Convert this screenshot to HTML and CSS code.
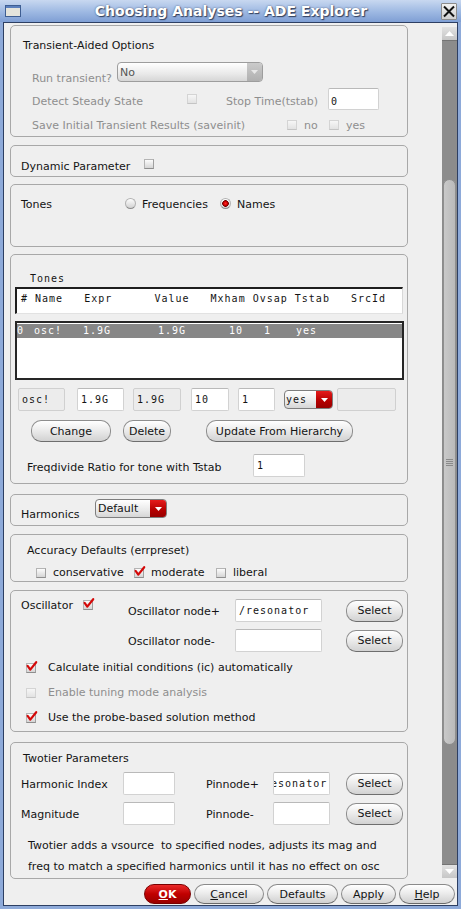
FILE: index.html
```html
<!DOCTYPE html>
<html>
<head>
<meta charset="utf-8">
<title>Choosing Analyses -- ADE Explorer</title>
<link rel="stylesheet" href="styles.css">
</head>
<body>
<div class="window">
  <div class="titlebar">
    <svg class="winicon" width="16" height="12" viewBox="0 0 16 12"><rect x="0.5" y="0.5" width="15" height="11" fill="#e4e4dc" stroke="#3e5e92"/><rect x="1" y="1" width="14" height="2" fill="#5b80bd"/></svg>
    <div class="title">Choosing Analyses -- ADE Explorer</div>
    <div class="closebtn"><svg width="14" height="15" viewBox="0 0 14 15"><path d="M2 2.5 L12 12.5 M12 2.5 L2 12.5" stroke="#111" stroke-width="2" fill="none"/></svg></div>
  </div>
  <div class="client">
    <div class="main">
      <div class="content">

        <div class="panel p1">
          <div class="ptitle t-trans">Transient-Aided Options</div>
          <div class="row r-run">
            <span class="dis lbl-run">Run transient?</span>
            <div class="combo combo-no"><span class="combo-text">No</span><span class="combo-arrow arrow-gray"><svg width="7" height="4" viewBox="0 0 7 4"><polygon points="0,0 7,0 3.5,4" fill="#e8e8e8"/></svg></span></div>
          </div>
          <div class="row r-detect">
            <span class="dis lbl-detect">Detect Steady State</span>
            <span class="cb dis-cb"></span>
            <span class="dis lbl-stop">Stop Time(tstab)</span>
            <div class="field f-stop"><span class="mono">0</span></div>
          </div>
          <div class="row r-save">
            <span class="dis lbl-save">Save Initial Transient Results (saveinit)</span>
            <span class="opt opt-no"><span class="cb dis-cb"></span><span class="dis opt-text">no</span></span>
            <span class="opt"><span class="cb dis-cb"></span><span class="dis opt-text">yes</span></span>
          </div>
        </div>

        <div class="panel p2">
          <div class="row r-dyn">
            <span class="lbl-dyn">Dynamic Parameter</span>
            <span class="cb cb-up"></span>
          </div>
        </div>

        <div class="panel p3">
          <div class="row r-tones">
            <span class="lbl-tones">Tones</span>
            <span class="ropt ropt-freq"><span class="radio"></span><span class="ropt-text">Frequencies</span></span>
            <span class="ropt"><span class="radio on"></span><span class="ropt-text">Names</span></span>
          </div>
        </div>

        <div class="panel p4">
          <div class="mono t-tones">Tones</div>
          <div class="mono hdr"># Name   Expr      Value   Mxham Ovsap Tstab   SrcId</div>
          <div class="list">
            <div class="mono selrow">
              <span class="c0">0</span><span class="c1">osc!</span><span class="c2">1.9G</span><span class="c3">1.9G</span><span class="c4">10</span><span class="c5">1</span><span class="c6">yes</span>
            </div>
          </div>
          <div class="row inrow">
            <div class="field dis-field f-osc"><span class="mono">osc!</span></div>
            <div class="field f-19"><span class="mono">1.9G</span></div>
            <div class="field dis-field f-19d"><span class="mono">1.9G</span></div>
            <div class="field f-10"><span class="mono">10</span></div>
            <div class="field f-1"><span class="mono">1</span></div>
            <div class="combo combo-yes"><span class="combo-text mono">yes</span><span class="combo-arrow arrow-red"><svg width="7" height="4" viewBox="0 0 7 4"><polygon points="0,0 7,0 3.5,4" fill="#fff"/></svg></span></div>
            <div class="field dis-field f-empty"></div>
          </div>
          <div class="row btnrow">
            <div class="btn b-change">Change</div>
            <div class="btn b-delete">Delete</div>
            <div class="btn b-update">Update From Hierarchy</div>
          </div>
          <div class="row freqrow">
            <span class="lbl-freq">Freqdivide Ratio for tone with Tstab</span>
            <div class="field f-freq"><span class="mono">1</span></div>
          </div>
        </div>

        <div class="panel p5">
          <div class="row r-harm">
            <span class="lbl-harm">Harmonics</span>
            <div class="combo combo-def"><span class="combo-text">Default</span><span class="combo-arrow arrow-red"><svg width="7" height="4" viewBox="0 0 7 4"><polygon points="0,0 7,0 3.5,4" fill="#fff"/></svg></span></div>
          </div>
        </div>

        <div class="panel p6">
          <div class="t-acc">Accuracy Defaults (errpreset)</div>
          <div class="row r-acc">
            <span class="opt acc1"><span class="cb"></span><span class="opt-text">conservative</span></span>
            <span class="opt acc2"><span class="cb"><svg class="chk" width="12" height="12" viewBox="0 0 12 12"><path d="M1.6 4.8 L4.3 8.6 L10.2 1.2" stroke="#d40808" stroke-width="2.2" fill="none" stroke-linecap="round" stroke-linejoin="round"/></svg></span><span class="opt-text">moderate</span></span>
            <span class="opt"><span class="cb"></span><span class="opt-text">liberal</span></span>
          </div>
        </div>

        <div class="panel p7">
          <div class="osc-top">
            <div class="osc-left">
              <span class="lbl-osc">Oscillator</span>
              <span class="cb cb-osc"><svg class="chk" width="12" height="12" viewBox="0 0 12 12"><path d="M1.6 4.8 L4.3 8.6 L10.2 1.2" stroke="#d40808" stroke-width="2.2" fill="none" stroke-linecap="round" stroke-linejoin="round"/></svg></span>
            </div>
            <div class="osc-right">
              <div class="row nrow">
                <span class="lbl-node">Oscillator node+</span>
                <div class="field f-node"><span class="mono">/resonator</span></div>
                <div class="btn b-sel">Select</div>
              </div>
              <div class="row nrow nrow2">
                <span class="lbl-node">Oscillator node-</span>
                <div class="field f-node"></div>
                <div class="btn b-sel">Select</div>
              </div>
            </div>
          </div>
          <div class="row cbrow cbrow1">
            <span class="cb"><svg class="chk" width="12" height="12" viewBox="0 0 12 12"><path d="M1.6 4.8 L4.3 8.6 L10.2 1.2" stroke="#d40808" stroke-width="2.2" fill="none" stroke-linecap="round" stroke-linejoin="round"/></svg></span>
            <span class="cb-text">Calculate initial conditions (ic) automatically</span>
          </div>
          <div class="row cbrow cbrow2">
            <span class="cb dis-cb"></span>
            <span class="cb-text dis">Enable tuning mode analysis</span>
          </div>
          <div class="row cbrow cbrow2">
            <span class="cb"><svg class="chk" width="12" height="12" viewBox="0 0 12 12"><path d="M1.6 4.8 L4.3 8.6 L10.2 1.2" stroke="#d40808" stroke-width="2.2" fill="none" stroke-linecap="round" stroke-linejoin="round"/></svg></span>
            <span class="cb-text">Use the probe-based solution method</span>
          </div>
        </div>

        <div class="panel p8">
          <div class="t-two">Twotier Parameters</div>
          <div class="row trow">
            <span class="lbl-t1">Harmonic Index</span>
            <div class="field f-t1"></div>
            <span class="lbl-t2">Pinnode+</span>
            <div class="field f-t2"><span class="mono pin-text">/resonator</span></div>
            <div class="btn b-sel b-sel-t">Select</div>
          </div>
          <div class="row trow trow2">
            <span class="lbl-t1">Magnitude</span>
            <div class="field f-t1"></div>
            <span class="lbl-t2">Pinnode-</span>
            <div class="field f-t2"></div>
            <div class="btn b-sel b-sel-t">Select</div>
          </div>
          <div class="note">Twotier adds a vsource  to specified nodes, adjusts its mag and
freq to match a specified harmonics until it has no effect on osc</div>
        </div>

      </div>
      <div class="scrollbar">
        <div class="sb-btn sb-up"><svg width="9" height="5" viewBox="0 0 9 5"><polygon points="0,5 9,5 4.5,0" fill="#fff"/></svg></div>
        <div class="sb-track">
          <div class="sb-thumb"><svg width="7" height="7" viewBox="0 0 7 7"><path d="M0 0.5 H7 M0 2.5 H7 M0 4.5 H7 M0 6.5 H7" stroke="#8a8a8a" stroke-width="1"/></svg></div>
        </div>
        <div class="sb-btn sb-down"><svg width="9" height="5" viewBox="0 0 9 5"><polygon points="0,0 9,0 4.5,5" fill="#fff"/></svg></div>
      </div>
    </div>
    <div class="buttonbar">
      <div class="bbtn bb-ok"><span class="ul">O</span>K</div>
      <div class="bbtn bb-cancel"><span class="ul">C</span>ancel</div>
      <div class="bbtn bb-defaults">Defaults</div>
      <div class="bbtn bb-apply">Apply</div>
      <div class="bbtn bb-help"><span class="ul">H</span>elp</div>
    </div>
  </div>
</div>
</body>
</html>
```

FILE: styles.css
```css
* { box-sizing: border-box; }
html, body { margin: 0; padding: 0; }
body {
  width: 461px; height: 909px; overflow: hidden;
  font-family: "DejaVu Sans", "Noto Sans", sans-serif;
  font-size: 11px; line-height: 13px; color: #141414;
  background: #8eaad9;
}
.mono { font-family: "DejaVu Sans Mono", "Liberation Mono", monospace; font-size: 10px; letter-spacing: 1px; }
.dis { color: #8e8e8e; }

.window {
  width: 461px; height: 909px;
  display: flex; flex-direction: column;
  padding: 0 3px 3px 3px;
  background: #8eaad9;
}
.titlebar {
  height: 22px; margin: 0 -3px;
  padding: 0 4px 0 5px;
  display: flex; align-items: center;
  background: linear-gradient(#c8d8f0, #9db8e2 55%, #7f9fd4);
}
.winicon { display: block; flex: none; margin-top: 0px; }
.title {
  flex: 1; text-align: center;
  font-weight: bold; font-size: 14px; line-height: 16px;
  color: #fff; text-shadow: 1px 1px 1px #33415e, 0 0 2px #4a5c80;
}
.closebtn {
  width: 16px; height: 17px; flex: none;
  border: 1px solid #8c8c8c; border-radius: 1px;
  background: linear-gradient(#f2f2f2, #d0d0d0);
  display: flex; align-items: center; justify-content: center;
}
.closebtn svg { display: block; }

.client {
  flex: 1;
  border: 1px solid #2d3f63;
  background: #efefef;
  display: flex; flex-direction: column;
}
.main { height: 857px; display: flex; }
.content {
  width: 438px; height: 857px; overflow: hidden;
  padding: 2px 0 0 6px;
  display: flex; flex-direction: column;
}
.panel {
  width: 398px; flex: none;
  border: 1px solid #a8a8a8; border-radius: 5px;
  display: flex; flex-direction: column;
}
.p1 { height: 112px; }
.p2 { height: 32px; margin-top: 8px; }
.p3 { height: 63px; margin-top: 7px; }
.p4 { height: 230px; margin-top: 7px; }
.p5 { height: 32px; margin-top: 10px; }
.p6 { height: 48px; margin-top: 8px; }
.p7 { height: 142px; margin-top: 8px; }
.p8 { height: 137px; margin-top: 10px; }

.row { display: flex; align-items: center; flex: none; white-space: nowrap; }

/* checkboxes, radios */
.cb {
  width: 10px; height: 10px; flex: none;
  border: 1px solid #b4b4b4; border-bottom-color: #8e8e8e; border-right-color: #a0a0a0;
  background: linear-gradient(#fcfcfc, #d5d5d5);
}
.cb .chk { display: block; margin: -3px 0 0 -1px; overflow: visible; }
.dis-cb { border-color: #d4d4d4; border-bottom-color: #c4c4c4; background: linear-gradient(#f6f6f6, #e2e2e2); }
.radio {
  width: 11px; height: 11px; flex: none; border-radius: 50%;
  border: 1px solid #b2b2b2; border-bottom-color: #8c8c8c;
  background: linear-gradient(#fdfdfd, #d2d2d2);
}
.radio.on {
  background: radial-gradient(circle, #ff2a2a 0, #d80000 1.8px, #6e0000 3px, rgba(0,0,0,0) 3.6px), linear-gradient(#fdfdfd, #d2d2d2);
}

/* fields */
.field {
  height: 23px; flex: none; overflow: hidden;
  border: 1px solid #d2d2d2; border-top-color: #b9b9b9; border-radius: 2px;
  background: #fff; padding-left: 3px;
  display: flex; align-items: center; white-space: nowrap;
}
.dis-field { background: #ececec; border-color: #d0d0d0; }

/* combos */
.combo {
  display: flex; flex: none; overflow: hidden;
  border: 1px solid #7e7e7e; border-radius: 4px;
  background: linear-gradient(#ffffff, #e9e9e9 60%, #d6d6d6);
}
.combo-text { flex: 1; padding-left: 2px; display: flex; align-items: center; }
.combo-arrow { flex: none; display: flex; align-items: center; justify-content: center; }
.arrow-red { width: 16px; background: linear-gradient(#e51c1c, #b40000 60%, #980000); }
.arrow-gray { width: 15px; background: linear-gradient(#cbcbcb, #b0b0b0); }
.combo-no { width: 146px; height: 20px; border-color: #9d9d9d; }
.combo-no .combo-text { color: #555; }
.combo-yes { width: 49px; height: 19px; }
.combo-yes .combo-text { padding-left: 1px; }
.combo-def { width: 72px; height: 19px; }

/* buttons */
.btn {
  height: 22px; flex: none;
  border: 1px solid #8e8e8e; border-bottom-color: #6e6e6e; border-radius: 10px;
  background: linear-gradient(#ffffff, #ececec 45%, #d2d2d2);
  display: flex; align-items: center; justify-content: center;
}

/* panel 1 */
.ptitle { flex: none; }
.t-trans { margin-top: 13px; height: 14px; line-height: 14px; padding-left: 12px; }
.r-run { margin-top: 9px; height: 20px; padding-left: 21px; align-items: flex-end; }
.lbl-run { width: 85px; margin-bottom: -3px; }
.r-detect { margin-top: 6px; height: 22px; padding-left: 21px; }
.lbl-detect { width: 155px; padding-top: 4px; }
.lbl-stop { width: 102px; margin-left: 29px; padding-top: 4px; }
.f-stop { width: 51px; height: 22px; padding-left: 2px; }
.f-stop .mono { padding-top: 4px; }
.r-save { margin-top: 8px; height: 14px; padding-left: 21px; }
.lbl-save { width: 255px; }
.opt { display: flex; align-items: center; flex: none; }
.opt-text { margin-left: 7px; }
.opt-no { width: 42px; }

/* panel 2 */
.r-dyn { margin-top: 13px; height: 14px; padding-left: 10px; }
.lbl-dyn { width: 123px; }
.cb-up { margin-top: -4px; }

/* panel 3 */
.r-tones { margin-top: 12px; height: 14px; padding-left: 10px; }
.lbl-tones { width: 104px; }
.ropt { display: flex; align-items: center; flex: none; }
.ropt .radio { margin-top: -2px; }
.ropt-text { margin-left: 6px; }
.ropt-freq { width: 95px; }

/* panel 4 */
.t-tones { margin-top: 17px; height: 14px; line-height: 14px; padding-left: 19px; flex: none; }
.hdr {
  margin: 1px 0 0 4px; width: 388px; height: 27px; flex: none;
  border-top: 2px solid #1e1e1e; border-left: 2px solid #1e1e1e;
  border-right: 1px solid #d8d8d8; border-bottom: 1px solid #e2e2e2;
  background: #fff; padding: 3px 0 0 4px; white-space: pre; line-height: 13px;
}
.list {
  margin: 7px 0 0 4px; width: 389px; height: 59px; flex: none;
  border: 2px solid #262626; background: #fff;
}
.selrow {
  margin-top: 1px; height: 14px; line-height: 14px;
  background: #878787; color: #fff; display: flex; white-space: pre;
}
.c0 { width: 17px; }
.c1 { width: 49px; }
.c2 { width: 75px; }
.c3 { width: 71px; }
.c4 { width: 35px; }
.c5 { width: 32px; }
.inrow { margin-top: 8px; height: 23px; padding-left: 7px; }
.f-osc { width: 47px; margin-right: 12px; }
.f-19 { width: 47px; margin-right: 9px; }
.f-19d { width: 48px; margin-right: 10px; }
.f-10 { width: 38px; margin-right: 9px; }
.f-1 { width: 37px; margin-right: 9px; }
.combo-yes { margin-right: 4px; }
.f-empty { width: 59px; }
.btnrow { margin-top: 9px; height: 22px; padding-left: 20px; }
.b-change { width: 80px; }
.b-delete { width: 48px; margin-left: 12px; }
.b-update { width: 147px; margin-left: 35px; }
.freqrow { margin-top: 12px; height: 23px; padding-left: 16px; }
.lbl-freq { width: 226px; padding-top: 4px; }
.f-freq { width: 52px; }

/* panel 5 */
.r-harm { margin-top: 4px; height: 19px; padding-left: 10px; align-items: flex-end; }
.lbl-harm { width: 74px; margin-bottom: -3px; }

/* panel 6 */
.t-acc { margin-top: 9px; height: 13px; padding-left: 16px; flex: none; }
.r-acc { margin-top: 9px; height: 13px; padding-left: 25px; }
.acc1 { width: 98px; }
.acc2 { width: 82px; }

/* panel 7 */
.osc-top { margin-top: 8px; display: flex; padding-left: 10px; flex: none; }
.osc-left { width: 107px; display: flex; align-items: flex-start; flex: none; }
.lbl-osc { width: 62px; }
.cb-osc { margin-top: 1px; }
.osc-right { display: flex; flex-direction: column; }
.nrow { height: 23px; }
.nrow2 { margin-top: 7px; }
.lbl-node { width: 107px; padding-top: 2px; }
.f-node { width: 87px; }
.b-sel { width: 57px; margin-left: 24px; }
.cbrow { height: 13px; padding-left: 15px; }
.cbrow1 { margin-top: 9px; }
.cbrow2 { margin-top: 12px; }
.cb-text { margin-left: 12px; }

/* panel 8 */
.t-two { margin-top: 9px; height: 13px; padding-left: 12px; flex: none; }
.trow { margin-top: 7px; height: 23px; padding-left: 10px; }
.lbl-t1 { width: 102px; padding-top: 2px; }
.f-t1 { width: 52px; }
.lbl-t2 { width: 67px; margin-left: 31px; padding-top: 2px; }
.f-t2 { width: 57px; }
.pin-text { margin-left: -20px; }
.b-sel-t { margin-left: 16px; }
.note { margin-top: 11px; padding-left: 17px; line-height: 20.5px; white-space: pre; flex: none; }

/* scrollbar */
.scrollbar { width: 15px; flex: none; padding-top: 4px; display: flex; flex-direction: column; }
.sb-btn {
  height: 14px; flex: none;
  background: linear-gradient(#e2e2e2, #c6c6c6);
  display: flex; align-items: center; justify-content: center;
}
.sb-up { border-bottom: 1px solid #747474; }
.sb-down { border-top: 1px solid #747474; }
.sb-btn svg { display: block; }
.sb-track { height: 823px; flex: none; background: #8c8c8c; padding-top: 138px; }
.sb-thumb {
  height: 566px; margin: 0 1px;
  border: 1px solid #8f8f8f; border-radius: 7px;
  background: linear-gradient(90deg, #c9c9c9, #bababa);
  display: flex; align-items: center; justify-content: center;
}
.sb-thumb svg { display: block; }

/* bottom bar */
.buttonbar {
  flex: 1; display: flex; justify-content: flex-end; align-items: flex-start;
  padding: 4px 2px 0 0;
}
.bbtn {
  height: 20px; flex: none; margin-left: 3px;
  border: 1px solid #8a8a8a; border-bottom-color: #6a6a6a; border-radius: 10px;
  background: linear-gradient(#ffffff, #ececec 45%, #d0d0d0);
  display: flex; align-items: center; justify-content: center;
  font-size: 11px;
}
.ul { text-decoration: underline; }
.bb-ok {
  width: 47px; color: #fff; font-weight: bold;
  border-color: #7a0000;
  background: linear-gradient(#ea2a2a, #c00000 50%, #9a0000);
}
.bb-cancel { width: 70px; }
.bb-defaults { width: 71px; }
.bb-apply { width: 55px; }
.bb-help { width: 56px; }
```
